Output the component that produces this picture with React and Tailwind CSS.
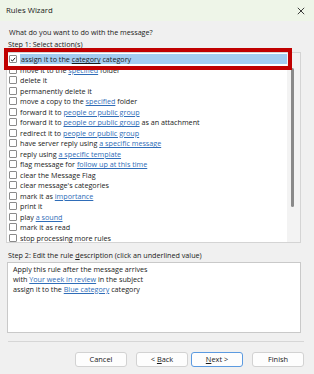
import React from "react";

const Link = ({ children }) => (
    <span className="text-[#2f6db8] underline decoration-[#2f6db8] underline-offset-[1px]">{children}</span>
);

const actions = [
    ["assign it to the ", "category", " category"],
    ["move it to the ", "specified", " folder"],
    ["delete it"],
    ["permanently delete it"],
    ["move a copy to the ", "specified", " folder"],
    ["forward it to ", "people or public group", ""],
    ["forward it to ", "people or public group", " as an attachment"],
    ["redirect it to ", "people or public group", ""],
    ["have server reply using ", "a specific message", ""],
    ["reply using ", "a specific template", ""],
    ["flag message for ", "follow up at this time", ""],
    ["clear the Message Flag"],
    ["clear message's categories"],
    ["mark it as ", "importance", ""],
    ["print it"],
    ["play ", "a sound", ""],
    ["mark it as read"],
    ["stop processing more rules"],
];

const Checkbox = ({ checked }) => (
    <div className="w-[8px] h-[8px] border border-[#8a8a8a] bg-white rounded-[1px] flex items-center justify-center shrink-0">
        {checked && (
            <svg width="7" height="7" viewBox="0 0 10 10">
                <path d="M1.5 5.2 L4 7.6 L8.6 2.2" fill="none" stroke="#111" strokeWidth="1.6" />
            </svg>
        )}
    </div>
);

const Button = ({ children, primary }) => (
    <button
        className={
            primary
                ? "w-[52px] h-[15px] bg-[#fdfdfd] border border-[#5b9ae0] rounded-[3px] text-[7.4px] text-[#1a1a1a] leading-none"
                : "w-[52px] h-[15px] bg-[#fdfdfd] border border-[#d2d2d2] rounded-[3px] text-[7.4px] text-[#1a1a1a] leading-none"
        }
    >
        {children}
    </button>
);

export default function App() {
    return (
        <div
            className="relative w-[314px] h-[374px] bg-[#f0f0f0] overflow-hidden text-[#1a1a1a]"
            style={{ fontFamily: '"Segoe UI", "Open Sans", "Noto Sans", sans-serif' }}
        >
            {/* title bar */}
            <div className="h-[21px] bg-[#eef5e8] flex items-center justify-between pl-[6px] pr-[9px]">
                <span className="text-[7.8px] leading-none">Rules Wizard</span>
                <svg width="8" height="8" viewBox="0 0 10 10">
                    <path d="M1 1 L9 9 M9 1 L1 9" stroke="#222" strokeWidth="1.1" />
                </svg>
            </div>

            <div className="mt-[6px] pl-[9px] h-[10px] leading-[10px] text-[7.2px]">What do you want to do with the message?</div>
            <div className="mt-[2px] pl-[8px] h-[10px] leading-[10px] text-[7.2px]">Step 1: Select action(s)</div>

            {/* actions list */}
            <div className="mt-[3px] ml-[6px] w-[295px] h-[191px] bg-white border border-[#d4d4d4] flex">
                <div className="flex-1 pt-[1px]">
                    {actions.map((a, i) => (
                        <div key={i} className="h-[10.5px] flex items-center pl-[2px] gap-[3px] text-[7.2px] whitespace-nowrap">
                            <Checkbox checked={i === 0} />
                            {i === 0 ? (
                                <div className="flex-1 h-[10px] bg-[#a3cdf0] leading-[10px] pl-[1px]">
                                    assign it to the <span className="underline underline-offset-[1px]">category</span> category
                                </div>
                            ) : (
                                <span className="leading-[10px]">
                                    {a[0]}
                                    {a[1] && <Link>{a[1]}</Link>}
                                    {a[2]}
                                </span>
                            )}
                        </div>
                    ))}
                </div>
                <div className="w-[13px] bg-[#f3f3f3] pl-[4px] pt-[15px]">
                    <div className="w-[3px] h-[139px] bg-[#8a8a8a] rounded-full" />
                </div>
            </div>

            <div className="mt-[7px] pl-[8px] h-[10px] leading-[10px] text-[7.2px]">
                Step 2: Edit the rule <span className="underline underline-offset-[1px]">d</span>escription (click an underlined value)
            </div>

            {/* description */}
            <div className="mt-[2px] ml-[7px] w-[294px] h-[71px] bg-white border border-[#c9c9c9] pt-[1px] pl-[5px] text-[7.2px]">
                <div className="h-[10px] leading-[10px]">Apply this rule after the message arrives</div>
                <div className="h-[10px] leading-[10px]">
                    with <Link>Your week in review</Link> in the subject
                </div>
                <div className="h-[10px] leading-[10px]">
                    assign it to the <Link>Blue category</Link> category
                </div>
            </div>

            <div className="mt-[8px] ml-[8px] w-[296px] h-[1px] bg-[#d6d6d6]" />

            {/* buttons */}
            <div className="mt-[10px] pr-[10px] flex justify-end">
                <Button>Cancel</Button>
                <div className="w-[9px]" />
                <Button>
                    &lt; <span className="underline">B</span>ack
                </Button>
                <div className="w-[3px]" />
                <Button primary>
                    <span className="underline">N</span>ext &gt;
                </Button>
                <div className="w-[9px]" />
                <Button>Finish</Button>
            </div>

            {/* red highlight frame */}
            <div className="absolute left-[4px] top-[48px] w-[288px] h-[22px] border-[4px] border-[#c00000] pointer-events-none" />
        </div>
    );
}
